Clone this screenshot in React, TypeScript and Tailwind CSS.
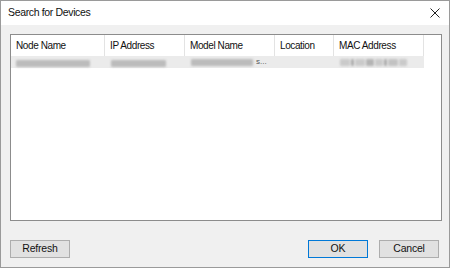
import React from "react";

type Col = { title: string; w: string };

const cols: Col[] = [
  { title: "Node Name", w: "w-[94px]" },
  { title: "IP Address", w: "w-[80px]" },
  { title: "Model Name", w: "w-[90px]" },
  { title: "Location", w: "w-[59px]" },
  { title: "MAC Address", w: "w-[90px]" },
];

const font = "font-['Liberation_Sans',Arial,sans-serif]";

function Blur({ w, tone = "bg-[#bcbcbc]" }: { w: string; tone?: string }) {
  return <span className={`inline-block h-[7px] ${w} rounded-[1px] ${tone} blur-[1px]`} />;
}

function Btn({ label, primary }: { label: string; primary?: boolean }) {
  return (
    <button
      type="button"
      className={`flex h-[18px] w-[60px] items-center justify-center bg-[#e1e1e1] text-[10.5px] tracking-[-0.2px] text-[#111] ${
        primary ? "border-[1.5px] border-[#0078d7]" : "border border-[#adadad]"
      }`}
    >
      {label}
    </button>
  );
}

export default function App() {
  return (
    <div className={`flex h-[268px] w-[450px] flex-col border border-[#9a9a9a] bg-[#f0f0f0] ${font}`}>
      <div className="flex h-[24px] shrink-0 items-center justify-between bg-white pl-[7px] pr-[9px]">
        <span className="text-[10.5px] tracking-[-0.35px] text-[#111]">Search for Devices</span>
        <svg width="10" height="10" viewBox="0 0 10 10">
          <path d="M0.5 0.5 L9.5 9.5 M9.5 0.5 L0.5 9.5" stroke="#222" strokeWidth="1" />
        </svg>
      </div>

      <div className="flex flex-1 flex-col px-[9px] pt-[9px]">
        <div className="h-[187px] w-[432px] border border-[#8c8c8c] bg-white">
          <div className="flex h-[21px] items-stretch">
            {cols.map((c) => (
              <div
                key={c.title}
                className={`${c.w} flex items-center border-r border-[#e3e3e3] pl-[5px] text-[10px] tracking-[-0.4px] text-[#111]`}
              >
                {c.title}
              </div>
            ))}
          </div>
          <div className="flex h-[12px] w-[413px] items-center bg-[#ebebeb]">
            <div className="w-[94px] pl-[5px]">
              <Blur w="w-[74px]" />
            </div>
            <div className="w-[80px] pl-[6px]">
              <Blur w="w-[55px]" />
            </div>
            <div className="flex w-[90px] items-center pl-[6px]">
              <Blur w="w-[62px]" />
              <span className="ml-[3px] text-[8px] leading-none text-[#555]">s...</span>
            </div>
            <div className="w-[59px]" />
            <div className="flex w-[80px] items-center gap-[1px] pl-[6px]">
              <Blur w="w-[10px]" tone="bg-[#cacaca]" />
              <Blur w="w-[3px]" tone="bg-[#a8a8a8]" />
              <Blur w="w-[10px]" tone="bg-[#cacaca]" />
              <Blur w="w-[8px]" tone="bg-[#b4b4b4]" />
              <Blur w="w-[8px]" tone="bg-[#cacaca]" />
              <Blur w="w-[3px]" tone="bg-[#a8a8a8]" />
              <Blur w="w-[10px]" tone="bg-[#c2c2c2]" />
              <Blur w="w-[8px]" tone="bg-[#cacaca]" />
            </div>
          </div>
        </div>

        <div className="mt-[19px] flex items-center">
          <Btn label="Refresh" />
          <div className="flex-1" />
          <Btn label="OK" primary />
          <div className="w-[11px]" />
          <Btn label="Cancel" />
          <div className="w-[1px]" />
        </div>
      </div>
    </div>
  );
}
